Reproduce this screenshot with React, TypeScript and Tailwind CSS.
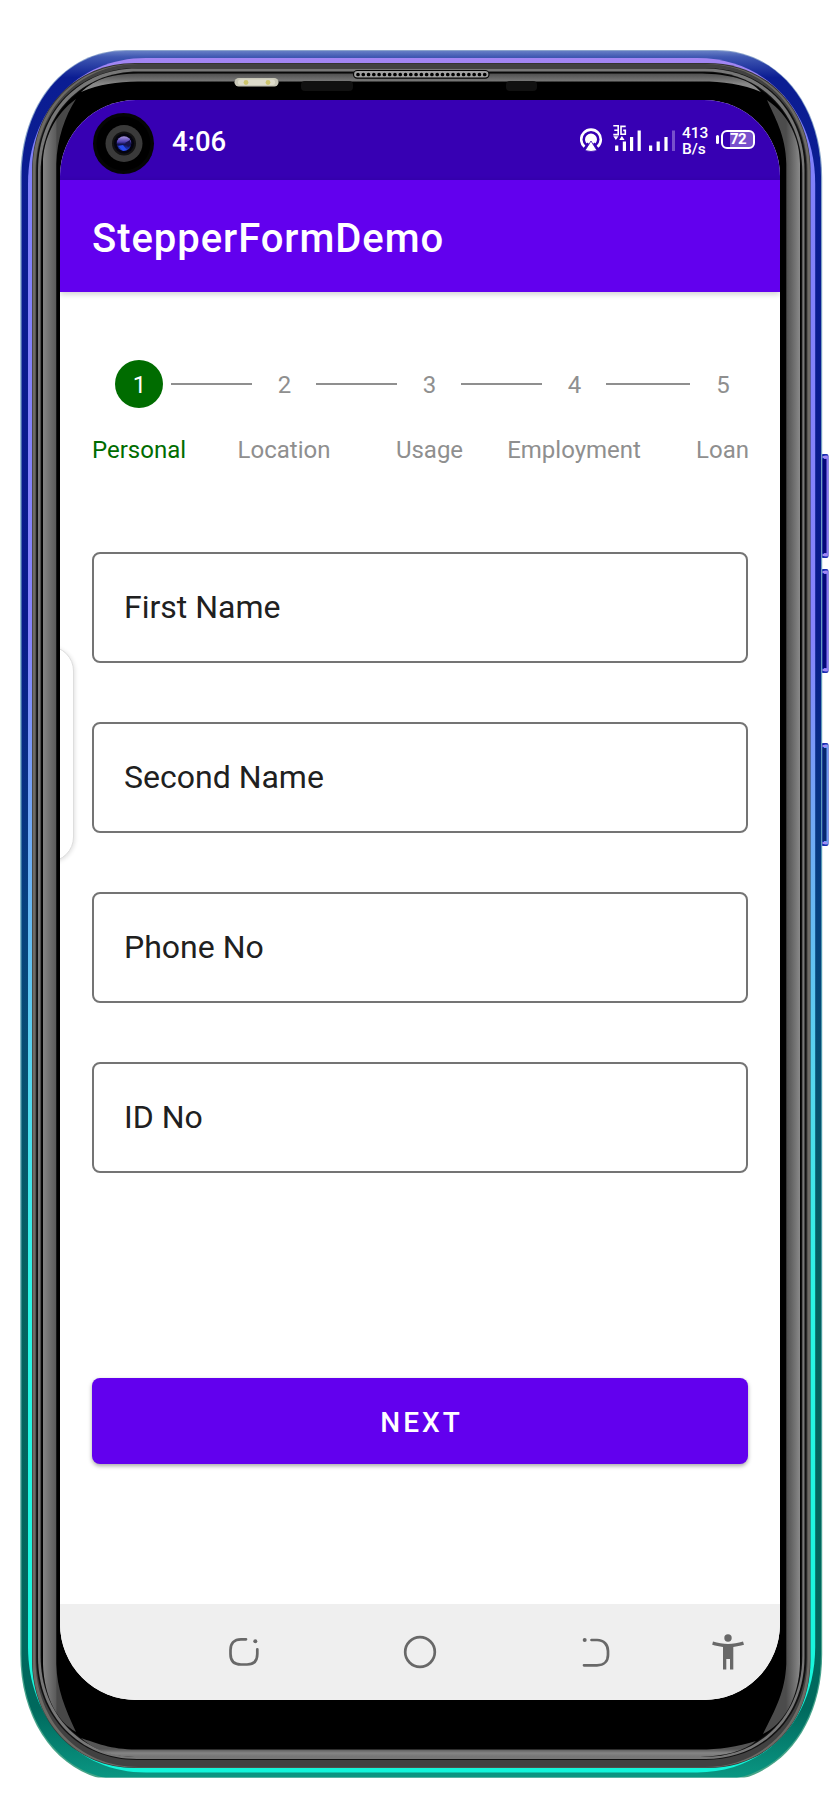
import React from "react";

type Edges = [left: number, top: number, right: number, bottom: number];

function shell([l, t, r, b]: Edges, rx: number, ry: number) {
  const kx = rx * 0.42;
  const ky = ry * 0.42;
  return `M${l} ${t + ry}C${l} ${t + ky} ${l + kx} ${t} ${l + rx} ${t}H${r - rx}C${r - kx} ${t} ${r} ${t + ky} ${r} ${t + ry}V${b - ry}C${r} ${b - ky} ${r - kx} ${b} ${r - rx} ${b}H${l + rx}C${l + kx} ${b} ${l} ${b - ky} ${l} ${b - ry}Z`;
}

function SideButton({ y, h, edge, core }: { y: number; h: number; edge: string; core: string }) {
  return (
    <g>
      <rect x="821" y={y} width="7.5" height={h} rx="2" fill="#1a2bb0" />
      <rect x="824" y={y + 1.5} width="4.2" height={h - 3} rx="1" fill={edge} />
      <rect x="822.5" y={y + 5} width="4" height={h - 10} fill={core} />
      <rect x="822.5" y={y + 2} width="4.5" height="2" fill="#a18af0" />
      <rect x="822.5" y={y + h - 4} width="4.5" height="2" fill="#a18af0" />
    </g>
  );
}

function PhoneBody() {
  return (
    <svg className="absolute inset-0" width="840" height="1800" viewBox="0 0 840 1800">
      <defs>
        <linearGradient id="rim" gradientUnits="userSpaceOnUse" x1="0" y1="50" x2="0" y2="1777">
          <stop offset="0" stopColor="#6c84c8" />
          <stop offset=".004" stopColor="#4058b2" />
          <stop offset=".016" stopColor="#0b1d93" />
          <stop offset=".33" stopColor="#091a8b" />
          <stop offset=".5" stopColor="#06417f" />
          <stop offset=".72" stopColor="#04635f" />
          <stop offset=".96" stopColor="#00695d" />
          <stop offset="1" stopColor="#0a9682" />
        </linearGradient>
        <linearGradient id="outline" gradientUnits="userSpaceOnUse" x1="0" y1="50" x2="0" y2="1777">
          <stop offset="0" stopColor="#8ca4cc" />
          <stop offset=".5" stopColor="#5298b4" />
          <stop offset="1" stopColor="#46a487" />
        </linearGradient>
        <linearGradient id="shine" gradientUnits="userSpaceOnUse" x1="0" y1="50" x2="0" y2="1777">
          <stop offset="0" stopColor="#a987f2" />
          <stop offset=".04" stopColor="#7f80fa" />
          <stop offset=".34" stopColor="#8583fc" />
          <stop offset=".45" stopColor="#70a9f5" />
          <stop offset=".6" stopColor="#54d7ee" />
          <stop offset=".72" stopColor="#2bf5e5" />
          <stop offset="1" stopColor="#12f5da" />
        </linearGradient>
        <linearGradient id="glossL" gradientUnits="userSpaceOnUse" x1="43" y1="0" x2="57" y2="0">
          <stop offset="0" stopColor="#858585" />
          <stop offset=".9" stopColor="#5c5c5c" />
          <stop offset="1" stopColor="#484848" />
        </linearGradient>
        <linearGradient id="glossR" gradientUnits="userSpaceOnUse" x1="786" y1="0" x2="800" y2="0">
          <stop offset="0" stopColor="#4c4c4c" />
          <stop offset="1" stopColor="#8a8a8a" />
        </linearGradient>
        <linearGradient id="glossT" gradientUnits="userSpaceOnUse" x1="0" y1="73" x2="0" y2="84">
          <stop offset="0" stopColor="#4c4c4c" />
          <stop offset="1" stopColor="#888" />
        </linearGradient>
        <linearGradient id="glossB" gradientUnits="userSpaceOnUse" x1="0" y1="1749" x2="0" y2="1757">
          <stop offset="0" stopColor="#555" />
          <stop offset=".5" stopColor="#858585" />
          <stop offset="1" stopColor="#747474" />
        </linearGradient>
        <clipPath id="trim">
          <rect x="0" y="0" width="840" height="1777.5" />
        </clipPath>
      </defs>
      <SideButton y={454} h={104} edge="#8a78f5" core="#050879" />
      <SideButton y={569} h={104} edge="#8a78f5" core="#050879" />
      <SideButton y={743} h={103} edge="#6f9bf4" core="#07286f" />
      <g clipPath="url(#trim)">
        <path d={shell([20.3, 50, 822.2, 1782], 106, 128)} fill="url(#outline)" />
        <path d={shell([21.6, 51, 821, 1780], 104, 126)} fill="url(#rim)" />
      </g>
      <path d={shell([28, 58, 815.2, 1772.5], 118, 126)} fill="url(#shine)" />
      <path d={shell([32, 63, 810.5, 1768], 103, 108)} fill="#343432" />
      <path d={shell([32.6, 64, 810, 1767.4], 103, 107)} fill="#6d6a65" />
      <path d={shell([35.5, 64, 807.5, 1767], 103, 108)} fill="#414141" />
      <path d={shell([36.3, 68, 806.5, 1760], 101, 103)} fill="#111" />
      <path d={shell([38, 68.5, 804.5, 1759], 99, 102)} fill="#777" />
      <path d={shell([40.6, 71.5, 802.3, 1757], 98, 101)} fill="#101010" />
      <path d={shell([41.5, 72.4, 801, 1756], 97, 100)} fill="#000" />
      <path d="M43 1664V164C43 139 55 114 76 99C65 116 57 139 56.3 164V1664C57 1690 65 1708 76 1732C58 1722 44 1698 43 1664Z" fill="url(#glossL)" />
      <path d="M800 1664V164C800 139 789 115 767 100C774 116 786 135 786.3 164V1664C785 1692 776 1708 763 1734C783 1725 799 1698 800 1664Z" fill="url(#glossR)" />
      <path d="M81 92C96 78 114 73.5 138 73.5H702C728 74 750 79 761 92C743 84 722 81.5 702 81.5H138C116 82 100 84 81 92Z" fill="url(#glossT)" />
      <path d="M81 1738C98 1753 116 1757 139 1757H700C724 1756 745 1751 756 1741C738 1747 718 1749.5 700 1749.5H139C112 1750 96 1743 81 1738Z" fill="url(#glossB)" />
      <rect x="301" y="81" width="52" height="10" rx="4" fill="#111" />
      <rect x="506" y="81" width="31" height="10" rx="4" fill="#111" />
      <rect x="234.5" y="78" width="44" height="8.6" rx="4.3" fill="#c9c8b8" />
      <rect x="238" y="79.5" width="37" height="5.5" rx="2.5" fill="#dedccb" />
      <circle cx="246" cy="82.5" r="2.4" fill="#cdc56d" />
      <circle cx="268" cy="82.5" r="2.4" fill="#cdc56d" />
      <rect x="353.5" y="70.5" width="135.5" height="7.6" rx="3.8" fill="#a0a0a0" stroke="#050505" strokeWidth="1.2" />
      <path d="M358 74.5H487" stroke="#000" strokeWidth="3.7" strokeLinecap="round" strokeDasharray="0 5.28" />
    </svg>
  );
}

function Camera() {
  return (
    <svg className="h-[62px] w-[62px] shrink-0" viewBox="0 0 62 62">
      <defs>
        <linearGradient id="lens" x1="0" y1="0" x2="0" y2="1">
          <stop offset="0" stopColor="#a996dc" />
          <stop offset=".4" stopColor="#4a3cae" />
          <stop offset=".55" stopColor="#101049" />
          <stop offset="1" stopColor="#2545dd" />
        </linearGradient>
      </defs>
      <circle cx="30.5" cy="30.5" r="30.5" fill="#050505" />
      <circle cx="30.5" cy="30.5" r="27" fill="#000" />
      <circle cx="31" cy="30.5" r="18.5" fill="#3a3a3a" />
      <circle cx="31" cy="30.5" r="12" fill="#111" />
      <circle cx="31" cy="30.5" r="10" fill="#030310" />
      <circle cx="31" cy="30.5" r="7.3" fill="url(#lens)" />
      <path d="M25 33l5 -1 4 5 -4 1z" fill="#284bf0" />
      <path d="M32 30l5 -3 1 5 -3 2z" fill="#17134f" />
    </svg>
  );
}

function StatusBar() {
  return (
    <div className="flex h-20 shrink-0 bg-[#3700b3] pt-[13px] pl-[33px] text-white">
      <Camera />
      <span className="mt-[13px] ml-[17px] w-[60px] text-[27.5px] leading-8 font-medium">4:06</span>
      <svg className="mt-[12px] ml-[348px] h-[28px] w-[96px] shrink-0" viewBox="580 125 96 28" fill="none">
        <path d="M584.5 146.8A9.8 9.8 0 1 1 597.5 146.8" stroke="#fff" strokeWidth="2.6" />
        <path d="M586.4 143.4A6 6 0 1 1 595.6 143.4L591 137.6Z" fill="#fff" />
        <circle cx="591" cy="139.3" r="5" fill="#fff" />
        <path d="M591 141L597 150.5Q591 152.5 585 150.5Z" fill="#fff" stroke="#3700b3" strokeWidth="0.8" />
        <path d="M613.3 125.7H618.2V134.6H613.3M614.3 130.2H618M625.7 126.4H621V134.2H625.3V130.4H623.2" stroke="#fff" strokeWidth="1.6" />
        <path d="M613.3 136.2H618.5L615.9 140Z M619.2 140H624.6L621.9 136Z" fill="#fff" />
        <path d="M616.7 145.5V151M624.4 141.5V151M631.6 137V151M639.2 130.5V151M650.6 145.5V151M658.2 141.5V151M666 137V151" stroke="#fff" strokeWidth="3.2" />
        <path d="M673.5 130.5V151" stroke="#7750cc" strokeWidth="3" />
      </svg>
      <span className="mt-[12px] ml-[6px] w-[30px] text-[15.5px] leading-4 font-medium">
        413
        <br />
        B/s
      </span>
      <div className="mt-[22px] ml-[4px] h-[9px] w-[3px] rounded-sm bg-white" />
      <div className="mt-[17px] ml-[2px] flex h-[19px] w-[34px] items-center justify-center rounded-[6px] border-2 border-white bg-[linear-gradient(90deg,#3700b3_24%,#7950cc_24%)] text-[15px] leading-none font-bold tracking-[-0.6px]">
        72
      </div>
    </div>
  );
}

const steps = [
  { label: "Personal", box: "w-[93px] text-[#006c00]" },
  { label: "Location", box: "ml-[52px] w-[94px]" },
  { label: "Usage", box: "ml-[64px] w-[69px]" },
  { label: "Employment", box: "ml-[43px] w-[134px]" },
  { label: "Loan", box: "ml-[55px] w-[53px]" },
];

function Rule({ wide = false }: { wide?: boolean }) {
  return <div className={wide ? "h-0.5 w-[84px] bg-[#8f8f8f]" : "h-0.5 w-[81px] bg-[#8f8f8f]"} />;
}

function Stepper() {
  return (
    <div className="mt-[68px] text-[24px] text-[#8f8f8f]">
      <div className="ml-[55px] flex h-12 items-center">
        <span className="flex h-12 w-12 items-center justify-center rounded-full bg-[#006c00] pt-px pl-px text-white">1</span>
        <div className="ml-2"><Rule /></div>
        <span className="w-16 pt-px pl-px text-center">2</span>
        <Rule />
        <span className="w-16 pt-px pl-px text-center">3</span>
        <Rule />
        <span className="w-16 pt-px pl-px text-center">4</span>
        <Rule wide />
        <span className="w-[66px] pt-px text-center">5</span>
      </div>
      <div className="mt-[26px] ml-8 flex leading-8">
        {steps.map((s) => (
          <span key={s.label} className={`${s.box} text-center whitespace-nowrap`}>
            {s.label}
          </span>
        ))}
      </div>
    </div>
  );
}

function NavigationBar() {
  return (
    <div className="mt-auto h-24 shrink-0 bg-[#efefef]">
      <svg className="block" width="720" height="96" viewBox="60 1604 720 96" fill="none" stroke="#686868" strokeWidth="2.7" strokeLinecap="round">
        <path d="M246 1639.3H241C234 1639.3 230.5 1643.5 230.5 1650V1654C230.5 1660.5 234 1664.5 241 1664.5H247C254 1664.5 257.3 1660.5 257.3 1654V1649.3" />
        <circle cx="255.3" cy="1641.3" r="2" fill="#686868" stroke="none" />
        <circle cx="420" cy="1652" r="14.8" />
        <path d="M591.5 1640H597C604 1640 608 1645 608 1651V1655C608 1661 604 1665.3 597 1665.3H584" />
        <circle cx="584.7" cy="1640" r="2" fill="#686868" stroke="none" />
        <g fill="#686868" stroke="none">
          <circle cx="728" cy="1638" r="3.7" />
          <path d="M713 1641.5C723 1644.7 733 1644.7 743 1641.5L744 1644.8C740 1646 737 1646.5 733.3 1647V1669.5H730V1659H726.3V1669.5H723V1647C719 1646.5 716 1646 712.2 1644.8Z" />
        </g>
      </svg>
    </div>
  );
}

export default function App() {
  return (
    <div className="relative h-[1800px] w-[840px] overflow-hidden bg-white font-[Roboto,sans-serif]">
      <PhoneBody />
      <div className="relative px-[60px] pt-[100px]">
        <div className="relative flex h-[1600px] w-[720px] flex-col overflow-hidden rounded-[76px] bg-white">
          <StatusBar />
          <header className="flex h-28 shrink-0 items-center bg-[#6200ee] pt-1.5 pl-8 shadow-[0_2px_6px_rgba(0,0,0,0.2)]">
            <h1 className="text-[40px] font-medium tracking-[0.95px] text-white">StepperFormDemo</h1>
          </header>
          <Stepper />
          <div className="mt-[86px] flex flex-col gap-[59px] px-8">
            {["First Name", "Second Name", "Phone No", "ID No"].map((name) => (
              <div key={name} className="flex h-[111px] items-center rounded-[8px] border-2 border-[#747474] pb-0.5 pl-[30px] text-[32px] text-[#202020]">
                {name}
              </div>
            ))}
          </div>
          <button className="mx-8 mt-[205px] h-[86px] shrink-0 rounded-[8px] bg-[#6200ee] pt-1 pl-[3px] text-[28px] font-medium tracking-[3px] text-white shadow-[0_2px_4px_rgba(0,0,0,0.35)]">
            NEXT
          </button>
          <NavigationBar />
          <div className="absolute top-[546px] -left-[36px] h-[216px] w-[50px] rounded-[36px] border border-[#dedede] bg-white shadow-[1px_1px_4px_rgba(0,0,0,0.12)]" />
        </div>
      </div>
    </div>
  );
}
